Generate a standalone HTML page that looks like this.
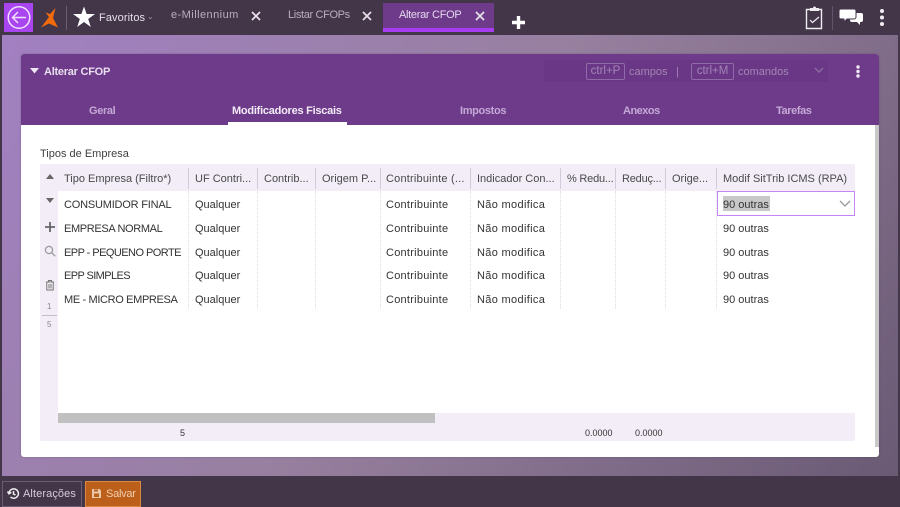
<!DOCTYPE html>
<html lang="pt-BR"><head><meta charset="utf-8"><title>Alterar CFOP</title>
<style>
html,body{margin:0;padding:0}
body{width:900px;height:507px;overflow:hidden;position:relative;background:#433649;font-family:"Liberation Sans",sans-serif;font-size:11px;color:#3a3a3a}
div,span,svg{position:absolute}
.t{white-space:nowrap;line-height:14px;height:14px}
.c{color:#333;font-size:11px}
.h{color:#4a4a4a;font-size:11px;top:172px}
.tab{color:#d8cfe0;font-size:11px;top:8px}
.nav{color:#c4a9d6;font-weight:bold;font-size:11px;top:104px;letter-spacing:-.35px}
.v{width:0;border-left:1px dotted #ddd;top:191px;height:118px}
.hv{width:1px;background:#d3cadb;top:168px;height:21px}
.kbd{border:1px solid #8f6aa6;border-radius:2px;color:#a285b5;height:15px;line-height:15px;font-size:11.5px;text-align:center;top:63px}
.ct{letter-spacing:.25px}
.nm{letter-spacing:.33px}
</style></head><body>
<div style="left:2px;top:35px;width:896px;height:441px;background:linear-gradient(125deg,#a280c2 0%,#97809f 48%,#6a5a74 100%)"></div>

<!-- top bar -->
<div style="left:4px;top:3px;width:29px;height:29px;background:#a845ef"></div>
<svg style="left:4px;top:3px" width="29" height="29" viewBox="0 0 29 29"><circle cx="15" cy="14.5" r="10.800" fill="none" stroke="#f1e0ff" stroke-width="1.500"/><path d="M22 14.500H9M14 9l-5.500 5.500 5.500 5.500" fill="none" stroke="#f1e0ff" stroke-width="1.500"/></svg>
<svg style="left:39px;top:6px" width="20" height="23" viewBox="0 0 20 23"><path d="M16.500 2L11 8 6.500 6.500 10 11 2 21.500l8-4 9 4-5-9.500z" fill="#f26a0c"/></svg>
<div style="left:66px;top:6px;width:1px;height:24px;background:#6b5e72"></div>
<svg style="left:73px;top:6px" width="22" height="22" viewBox="0 0 22 22"><path d="M11 .5l2.600 7.500H22l-6.800 5 2.600 8-6.800-5-6.800 5 2.600-8L0 8h8.400z" fill="#fff"/></svg>
<span class="t" style="left:99px;top:10.500px;color:#e6e0ea;font-size:11px;letter-spacing:.1px">Favoritos</span>
<span class="t" style="left:147px;top:10px;color:#a094a8;font-size:8px">⌄</span>
<span class="t tab" style="left:171px;color:#b9aec2;letter-spacing:.45px">e-Millennium</span>
<span class="t tab" style="left:288px;color:#b9aec2;letter-spacing:-.35px">Listar CFOPs</span>
<div style="left:383px;top:3px;width:111px;height:29px;background:#6e3b8a"></div>
<div style="left:383px;top:28px;width:111px;height:4px;background:#a83cf0"></div>
<span class="t tab" style="left:399px;color:#e4d8ec;letter-spacing:-.3px">Alterar CFOP</span>
<svg style="left:250px;top:10px" width="12" height="12"><path d="M2 2l8 8M10 2l-8 8" stroke="#e4e0e8" stroke-width="1.800"/></svg>
<svg style="left:361px;top:10px" width="12" height="12"><path d="M2 2l8 8M10 2l-8 8" stroke="#e4e0e8" stroke-width="1.800"/></svg>
<svg style="left:474px;top:10px" width="12" height="12"><path d="M2 2l8 8M10 2l-8 8" stroke="#e4e0e8" stroke-width="1.800"/></svg>
<svg style="left:511px;top:15px" width="15" height="15"><path d="M7.500 1v13M1 7.500h13" stroke="#fff" stroke-width="3.400"/></svg>
<svg style="left:804px;top:5px" width="20" height="25" viewBox="0 0 20 25"><path d="M3 4.500h14.500v19H2.500v-19z" fill="none" stroke="#f0edf2" stroke-width="1.400"/><path d="M6 3h3a1.500 1.500 0 0 1 3 0h3v3H6z" fill="#f0edf2"/><path d="M6 15l2.500 2.500L15 12" fill="none" stroke="#f0edf2" stroke-width="1.200"/></svg>
<div style="left:832px;top:6px;width:1px;height:24px;background:#62556a"></div>
<svg style="left:838px;top:8px" width="26" height="19" viewBox="0 0 26 19"><path d="M14 5h9a2 2 0 0 1 2 2v5a2 2 0 0 1-2 2h-1v3l-3-3h-5a2 2 0 0 1-2-2V7a2 2 0 0 1 2-2z" fill="#fff"/><path d="M3 1h13a2 2 0 0 1 2 2v6a2 2 0 0 1-2 2H9l-3 3v-3H3a2 2 0 0 1-2-2V3a2 2 0 0 1 2-2z" fill="#fff" stroke="#433649" stroke-width="1"/></svg>
<svg style="left:878px;top:8px" width="8" height="19"><circle cx="4" cy="3" r="2" fill="#f0edf2"/><circle cx="4" cy="9.500" r="2" fill="#f0edf2"/><circle cx="4" cy="16" r="2" fill="#f0edf2"/></svg>

<!-- panel -->
<div style="left:21px;top:54px;width:858px;height:403px;background:#fff;border-radius:3px;box-shadow:0 0 2px rgba(60,40,70,.3)"></div>
<div style="left:21px;top:54px;width:858px;height:71px;background:#6e3b8a;border-radius:3px 3px 0 0"></div>
<svg style="left:30px;top:68px" width="10" height="7"><path d="M0 0h9L4.500 5.500z" fill="#efe7f4"/></svg>
<span class="t" style="left:44px;top:65px;color:#e8deef;font-weight:bold;font-size:11px;letter-spacing:-.25px">Alterar CFOP</span>
<div style="left:544px;top:60px;width:284px;height:22px;background:#693785"></div>
<span class="kbd" style="left:586px;width:37px">ctrl+P</span>
<span class="t" style="left:629px;top:65px;color:#a285b5">campos</span>
<span class="t" style="left:676px;top:65px;color:#a285b5">|</span>
<span class="kbd" style="left:691px;width:41px">ctrl+M</span>
<span class="t" style="left:738px;top:65px;color:#a285b5">comandos</span>
<svg style="left:813px;top:67px" width="12" height="8"><path d="M2 1l4 4 4-4" fill="none" stroke="#8a6a9c" stroke-width="1.500"/></svg>
<svg style="left:855px;top:65px" width="6" height="13"><circle cx="3" cy="2" r="1.700" fill="#f3ecf7"/><circle cx="3" cy="6.500" r="1.700" fill="#f3ecf7"/><circle cx="3" cy="11" r="1.700" fill="#f3ecf7"/></svg>

<span class="t nav" style="left:89px">Geral</span>
<span class="t nav" style="left:232px;color:#f2ebf6;letter-spacing:-.25px">Modificadores Fiscais</span>
<div style="left:228px;top:122px;width:119px;height:3px;background:#fff"></div>
<span class="t nav" style="left:460px">Impostos</span>
<span class="t nav" style="left:623px;letter-spacing:-.5px">Anexos</span>
<span class="t nav" style="left:776px;letter-spacing:-.4px">Tarefas</span>

<div style="left:875px;top:125px;width:4px;height:322px;background:#c8c8c8"></div>

<span class="t" style="left:40px;top:147px;color:#3f3f3f">Tipos de Empresa</span>

<!-- grid -->
<div style="left:40px;top:164px;width:815px;height:277px;background:#f2edf7;border-radius:2px"></div>
<div style="left:58px;top:191px;width:797px;height:222px;background:#fff"></div>
<div style="left:58px;top:413px;width:377px;height:10px;background:#c0c0c0"></div>

<div class="hv" style="left:188px"></div><div class="hv" style="left:257px"></div><div class="hv" style="left:315px"></div><div class="hv" style="left:380px"></div><div class="hv" style="left:470px"></div><div class="hv" style="left:560px"></div><div class="hv" style="left:615px"></div><div class="hv" style="left:665px"></div><div class="hv" style="left:716px"></div>
<div class="v" style="left:188px"></div><div class="v" style="left:257px"></div><div class="v" style="left:315px"></div><div class="v" style="left:380px"></div><div class="v" style="left:470px"></div><div class="v" style="left:560px"></div><div class="v" style="left:615px"></div><div class="v" style="left:665px"></div><div class="v" style="left:716px"></div>

<span class="t h" style="left:64px">Tipo Empresa (Filtro*)</span>
<span class="t h" style="left:195px">UF Contri...</span>
<span class="t h" style="left:264px">Contrib...</span>
<span class="t h" style="left:322px">Origem P...</span>
<span class="t h" style="left:386px;letter-spacing:.2px">Contribuinte (...</span>
<span class="t h" style="left:477px">Indicador Con...</span>
<span class="t h" style="left:567px;letter-spacing:-.2px">% Redu...</span>
<span class="t h" style="left:622px;letter-spacing:-.2px">Reduç...</span>
<span class="t h" style="left:672px">Orige...</span>
<span class="t h" style="left:723px">Modif SitTrib ICMS (RPA)</span>

<span class="t c" style="left:64px;top:198px;letter-spacing:-.2px">CONSUMIDOR FINAL</span>
<span class="t c" style="left:64px;top:222px;letter-spacing:-.35px">EMPRESA NORMAL</span>
<span class="t c" style="left:64px;top:246px;letter-spacing:-.55px">EPP - PEQUENO PORTE</span>
<span class="t c" style="left:64px;top:269px;letter-spacing:-.6px">EPP SIMPLES</span>
<span class="t c" style="left:64px;top:293px;letter-spacing:-.35px">ME - MICRO EMPRESA</span>

<span class="t c" style="left:195px;top:198px">Qualquer</span>
<span class="t c" style="left:195px;top:222px">Qualquer</span>
<span class="t c" style="left:195px;top:246px">Qualquer</span>
<span class="t c" style="left:195px;top:269px">Qualquer</span>
<span class="t c" style="left:195px;top:293px">Qualquer</span>

<span class="t c ct" style="left:386px;top:198px">Contribuinte</span>
<span class="t c ct" style="left:386px;top:222px">Contribuinte</span>
<span class="t c ct" style="left:386px;top:246px">Contribuinte</span>
<span class="t c ct" style="left:386px;top:269px">Contribuinte</span>
<span class="t c ct" style="left:386px;top:293px">Contribuinte</span>

<span class="t c nm" style="left:477px;top:198px">Não modifica</span>
<span class="t c nm" style="left:477px;top:222px">Não modifica</span>
<span class="t c nm" style="left:477px;top:246px">Não modifica</span>
<span class="t c nm" style="left:477px;top:269px">Não modifica</span>
<span class="t c nm" style="left:477px;top:293px">Não modifica</span>

<div style="left:717px;top:191px;width:136px;height:23px;border:1px solid #c585f5;background:#fff"></div>
<div style="left:723px;top:196px;width:47px;height:15px;background:#c8c8c8"></div>
<svg style="left:839px;top:200px" width="12" height="8"><path d="M1 1l5 5 5-5" fill="none" stroke="#999" stroke-width="1.300"/></svg>
<span class="t c" style="left:723px;top:198px">90 outras</span>
<span class="t c" style="left:723px;top:222px">90 outras</span>
<span class="t c" style="left:723px;top:246px">90 outras</span>
<span class="t c" style="left:723px;top:269px">90 outras</span>
<span class="t c" style="left:723px;top:293px">90 outras</span>

<span class="t" style="left:180px;top:426px;font-size:9px;color:#333">5</span>
<span class="t" style="left:585px;top:426px;font-size:9px;color:#333">0.0000</span>
<span class="t" style="left:635px;top:426px;font-size:9px;color:#333">0.0000</span>

<!-- grid toolbar -->
<svg style="left:46px;top:174px" width="8" height="6"><path d="M0 5h8L4 0z" fill="#666"/></svg>
<svg style="left:46px;top:198px" width="8" height="6"><path d="M0 0h8L4 5z" fill="#666"/></svg>
<svg style="left:45px;top:222px" width="10" height="10"><path d="M5 0v10M0 5h10" stroke="#666" stroke-width="1.800"/></svg>
<svg style="left:44px;top:245px" width="12" height="12"><circle cx="5" cy="5" r="3.600" fill="none" stroke="#999" stroke-width="1.200"/><path d="M7.700 7.700l3.500 3.500" stroke="#999" stroke-width="1.300"/></svg>
<svg style="left:45px;top:279px" width="10" height="12"><path d="M1 3h8M3.500 3V1.500h3V3M1.800 3v8h6.400V3M4 5v4.500M6 5v4.500" fill="none" stroke="#777" stroke-width="1"/></svg>
<span class="t" style="left:47px;top:300px;font-size:8px;color:#888">1</span>
<div style="left:42px;top:315px;width:15px;height:1px;background:#c4bccb"></div>
<span class="t" style="left:47px;top:318px;font-size:8px;color:#888">5</span>

<!-- bottom -->
<div style="left:2px;top:481px;width:78px;height:24px;border:1px solid #6b5e72"></div>
<svg style="left:7px;top:487px" width="13" height="13" viewBox="0 0 13 13"><path d="M2 6.500a4.700 4.700 0 1 1 1.500 3.500M.5 4.500L2 6.800l2.300-1.600M6.500 4v3l2 1" fill="none" stroke="#eee" stroke-width="1.500"/></svg>
<span class="t" style="left:23px;top:487px;color:#d5ccdb;font-size:11px;letter-spacing:.1px">Alterações</span>
<div style="left:85px;top:481px;width:54px;height:24px;border:1px solid #d98a42;background:#bc5f1a"></div>
<svg style="left:91px;top:488px" width="11" height="11" viewBox="0 0 11 11"><path d="M1 1h7.500L10 2.500V10H1z" fill="#e8c8a8"/><rect x="3" y="5.500" width="5" height="3.500" fill="#bc5f1a"/><rect x="3" y="1.500" width="4" height="2" fill="#bc5f1a"/></svg>
<span class="t" style="left:106px;top:487px;color:#f0cfae;font-size:11px;letter-spacing:-.25px">Salvar</span>
</body></html>
